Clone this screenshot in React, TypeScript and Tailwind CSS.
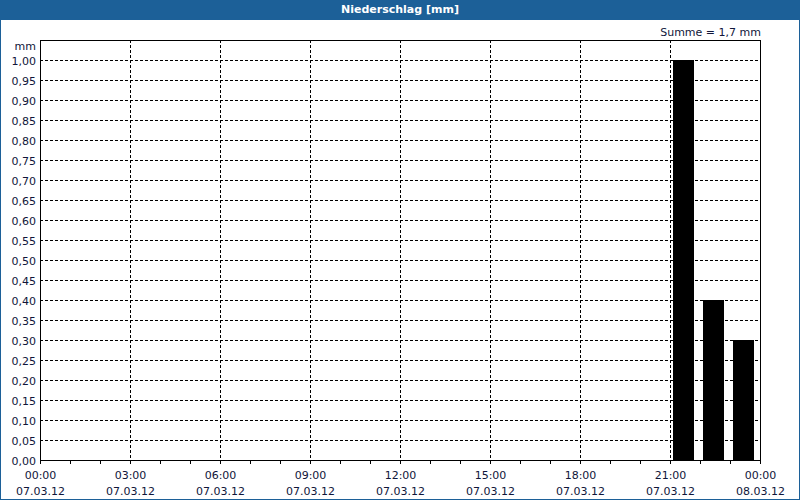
export default function App() {
  const yTicks = Array.from({ length: 21 }, (_, i) => i);
  const xTicks = Array.from({ length: 9 }, (_, i) => i);
  const times = ["00:00","03:00","06:00","09:00","12:00","15:00","18:00","21:00","00:00"];
  const bars = [
    { x: 673, v: 1.0 },
    { x: 703, v: 0.4 },
    { x: 733, v: 0.3 },
  ];
  return (
    <div className="w-[800px] h-[500px] bg-[#1c6098] flex flex-col" style={{ fontFamily: '"DejaVu Sans", Tahoma, sans-serif' }}>
      <div className="h-[20px] flex items-center justify-center text-white font-bold text-[11px]">Niederschlag [mm]</div>
      <div className="flex-1 mx-[1px] mb-[1px] bg-white relative">
        <svg width="798" height="479" viewBox="1 20 798 479" className="block" shapeRendering="crispEdges">
          {yTicks.map((i) => {
            const y = 460 - i * 20 + 0.5;
            const label = (i * 0.05).toFixed(2).replace(".", ",");
            return (
              <g key={i}>
                {i > 0 && i < 21 && <line x1={40} x2={760} y1={y} y2={y} stroke="#000" strokeDasharray="3 2" />}
                <text x={36} y={y + 4} textAnchor="end" fontSize="11" fill="#10163a">{label}</text>
              </g>
            );
          })}
          <text x={36} y={50} textAnchor="end" fontSize="11" fill="#10163a">mm</text>
          {xTicks.map((i) => {
            const x = 40 + i * 90 + 0.5;
            return (
              <g key={i}>
                {i > 0 && i < 8 && <line x1={x} x2={x} y1={40} y2={460} stroke="#000" strokeDasharray="3 2" />}
                <text x={x} y={479} textAnchor="middle" fontSize="11" fill="#10163a">{times[i]}</text>
                <text x={x} y={495} textAnchor="middle" fontSize="11" fill="#10163a">{i === 8 ? "08.03.12" : "07.03.12"}</text>
              </g>
            );
          })}
          {Array.from({ length: 25 }, (_, i) => (
            <line key={i} x1={40 + i * 30 + 0.5} x2={40 + i * 30 + 0.5} y1={460} y2={464} stroke="#000" />
          ))}
          {bars.map((b) => (
            <rect key={b.x} x={b.x} y={460 - b.v * 400} width={21} height={b.v * 400} fill="#000" />
          ))}
          <rect x={40.5} y={40.5} width={720} height={420} fill="none" stroke="#000" />
          <text x={761} y={36} textAnchor="end" fontSize="11" fill="#10163a">Summe = 1,7 mm</text>
        </svg>
      </div>
    </div>
  );
}
